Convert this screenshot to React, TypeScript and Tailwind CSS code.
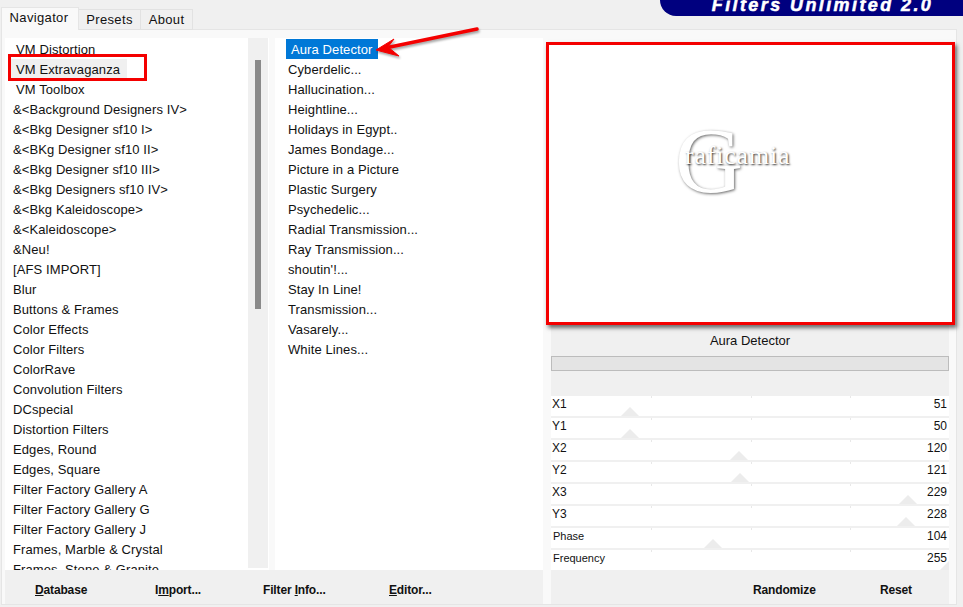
const categories = [
  ' VM Distortion',
  ' VM Extravaganza',
  ' VM Toolbox',
  '&<Background Designers IV>',
  '&<Bkg Designer sf10 I>',
  '&<BKg Designer sf10 II>',
  '&<Bkg Designer sf10 III>',
  '&<Bkg Designers sf10 IV>',
  '&<Bkg Kaleidoscope>',
  '&<Kaleidoscope>',
  '&Neu!',
  '[AFS IMPORT]',
  'Blur',
  'Buttons & Frames',
  'Color Effects',
  'Color Filters',
  'ColorRave',
  'Convolution Filters',
  'DCspecial',
  'Distortion Filters',
  'Edges, Round',
  'Edges, Square',
  'Filter Factory Gallery A',
  'Filter Factory Gallery G',
  'Filter Factory Gallery J',
  'Frames, Marble & Crystal',
  'Frames, Stone & Granite',
];

const filters = [
  'Aura Detector',
  'Cyberdelic...',
  'Hallucination...',
  'Heightline...',
  'Holidays in Egypt..',
  'James Bondage...',
  'Picture in a Picture',
  'Plastic Surgery',
  'Psychedelic...',
  'Radial Transmission...',
  'Ray Transmission...',
  "shoutin'!...",
  'Stay In Line!',
  'Transmission...',
  'Vasarely...',
  'White Lines...',
];

const sliders = [
  { name: 'X1', value: 51, thumb: 79 },
  { name: 'Y1', value: 50, thumb: 79 },
  { name: 'X2', value: 120, thumb: 188 },
  { name: 'Y2', value: 121, thumb: 189 },
  { name: 'X3', value: 229, thumb: 357 },
  { name: 'Y3', value: 228, thumb: 355 },
  { name: 'Phase', value: 104, thumb: 162 },
  { name: 'Frequency', value: 255, thumb: 398 },
];

const SliderRow = ({ name, value, thumb }: { name: string; value: number; thumb: number }) => (
  <div className="relative h-5 bg-white overflow-hidden flex items-center justify-between pl-px pr-[2px] text-[12px] leading-none">
    <span className={name.length > 2 ? 'pl-px text-[11px] -mt-[4px]' : '-mt-[4px]'}>{name}</span>
    <span className="-mt-[4px]">{value}</span>
    <div className="absolute top-0 left-[100px] w-px h-[2px] bg-[#e8e8e8]" />
    <div className="absolute top-0 left-[200px] w-px h-[2px] bg-[#e8e8e8]" />
    <div className="absolute top-0 left-[299px] w-px h-[2px] bg-[#e8e8e8]" />
    <div
      className="absolute bottom-0 w-0 h-0 border-x-[9px] border-x-transparent border-b-[9px] border-b-[#ececec]"
      style={{ left: thumb - 9 }}
    />
  </div>
);

const ActionButton = ({ before, mark, after }: { before: string; mark: string; after: string }) => (
  <span className="font-bold text-[12px] text-[#111] tracking-[-0.15px]">
    {before}
    <span className="underline">{mark}</span>
    {after}
  </span>
);

export default function App() {
  return (
    <div className="relative w-[963px] h-[607px] overflow-hidden bg-[#f0f0f0] text-[#111] font-['Liberation_Sans',sans-serif] text-[13px]">
      {/* tab strip + banner */}
      <div className="h-[29px] flex justify-between items-start">
        <div className="flex items-end h-[30px] pt-[7px] relative z-10 tracking-[0.35px]">
          <div className="w-[78px] h-[23px] ml-px bg-[#f9f9f9] border border-b-0 border-[#e5e5e5] flex items-center justify-center pb-[3px] pr-[2px]">
            Navigator
          </div>
          <div className="w-[62px] h-[21px] bg-[#f0f0f0] border border-l-0 border-[#e2e2e2] flex items-center justify-center">
            Presets
          </div>
          <div className="w-[52px] h-[21px] bg-[#f0f0f0] border border-l-0 border-[#e2e2e2] flex items-center justify-center">
            About
          </div>
        </div>
        <div className="w-[303px] h-[16px] bg-[#00007f] rounded-bl-[28px] overflow-hidden flex justify-center">
          <span className="font-bold italic text-[18px] leading-none text-white tracking-[2.4px] whitespace-nowrap -mt-[4px] ml-[22px] [-webkit-text-stroke:0.5px_white]">
            Filters Unlimited 2.0
          </span>
        </div>
      </div>

      {/* main panel */}
      <div className="ml-px w-[956px] h-[576px] bg-[#f9f9f9] border border-[#e5e5e5] flex pl-[3px] pt-2">
        <div className="w-[538px] flex flex-col">
          <div className="h-[532px] flex gap-[6px] tracking-[0.1px]">
            <div className="w-[264px] bg-white flex overflow-hidden">
              <div className="flex-1 overflow-hidden pt-px">
                {categories.map((item) => (
                  <div
                    key={item}
                    className={`h-5 leading-[22px] whitespace-nowrap ${
                      item === ' VM Extravaganza'
                        ? 'bg-[#f0f0f0] w-[117px] ml-[5px] pl-[6px]'
                        : item.startsWith(' ')
                          ? 'pl-[11px]'
                          : 'pl-2'
                    }`}
                  >
                    {item.trim()}
                  </div>
                ))}
              </div>
              <div className="w-5 mr-px bg-[#f0f0f0] mb-[2px] flex justify-center pt-[22px]">
                <div className="w-[6px] h-[249px] bg-[#8a8a8a]" />
              </div>
            </div>
            <div className="flex-1 bg-white pl-[11px] pt-px">
              {filters.map((item, i) => (
                <div
                  key={item}
                  className={`h-5 leading-[22px] whitespace-nowrap ${
                    i === 0 ? 'w-[92px] bg-[#0078d7] text-white pl-[5px]' : 'pl-[2px]'
                  }`}
                >
                  {item}
                </div>
              ))}
            </div>
          </div>
          <div className="h-[34px] bg-[#f0f0f0] flex items-center pl-[30px] pt-[6px]">
            <div className="w-[120px]">
              <ActionButton before="" mark="D" after="atabase" />
            </div>
            <div className="w-[108px]">
              <ActionButton before="I" mark="m" after="port..." />
            </div>
            <div className="w-[126px]">
              <ActionButton before="Filter " mark="I" after="nfo..." />
            </div>
            <ActionButton before="" mark="E" after="ditor..." />
          </div>
        </div>

        {/* preview + parameters */}
        <div className="w-[409px] ml-[3px] pt-[4px] flex flex-col">
          <div className="relative h-[283px] bg-white border-[3px] border-[#f40000] shadow-[2px_3px_4px_rgba(0,0,0,0.55)] z-10">
            <span className="absolute left-[126px] top-[68px] font-['Liberation_Serif',serif] text-[94px] leading-none text-white [text-shadow:1px_1px_3px_rgba(0,0,0,0.6)]">
              G
            </span>
            <span className="absolute left-[136px] top-[98px] font-['Liberation_Serif',serif] text-[26px] leading-none tracking-[0.8px] text-white [text-shadow:1px_1px_2px_rgba(0,0,0,0.8)]">
              raficamia
            </span>
          </div>
          <div className="ml-[5px] w-[398px] h-[279px] bg-[#f0f0f0] flex flex-col">
            <div className="h-[31px] flex items-center justify-center">Aura Detector</div>
            <div className="h-[15px] bg-[#e4e4e4] border border-[#bcbcbc]" />
            <div className="h-[25px]" />
            <div className="flex flex-col gap-[2px]">
              {sliders.map((s) => (
                <SliderRow key={s.name} {...s} />
              ))}
            </div>
            <div className="flex-1 flex items-center pl-[202px] pt-[6px]">
              <div className="w-[127px]">
                <ActionButton before="Randomize" mark="" after="" />
              </div>
              <ActionButton before="Reset" mark="" after="" />
            </div>
          </div>
        </div>
      </div>

      {/* annotations */}
      <div className="absolute left-[8px] top-[54px] w-[139px] h-[27px] border-[3px] border-[#f40000]" />
      <svg className="absolute left-[370px] top-[20px]" width="115" height="40" viewBox="0 0 115 40">
        <g fill="#f40000" stroke="#f40000" style={{ filter: 'drop-shadow(1px 2px 1px rgba(0,0,0,0.35))' }}>
          <path d="M107 9 L20 27" strokeWidth="3.5" strokeLinecap="round" />
          <path d="M6 30 L24 19 L18 27 L29 36 Z" strokeWidth="1" />
        </g>
      </svg>
    </div>
  );
}
